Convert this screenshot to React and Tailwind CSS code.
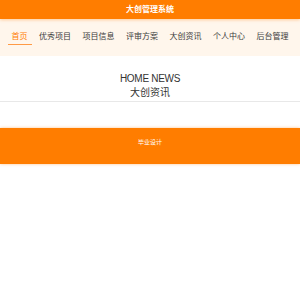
const navItems = ['首页', '优秀项目', '项目信息', '评审方案', '大创资讯', '个人中心', '后台管理'];

const App = () => {
  return (
    <div className="min-h-[300px] bg-white font-['Liberation_Sans','Noto_Sans_CJK_SC',sans-serif]">
      <header className="h-[19px] bg-[#ff7d00] shadow-[0_1px_3px_rgba(255,125,0,0.35)] relative z-10 flex items-center justify-center">
        <span className="text-[8px] leading-none font-semibold text-white">大创管理系统</span>
      </header>

      <nav className="h-[37px] bg-[#fff6ec] flex items-center justify-center gap-[3.5px] pt-[3px]">
        {navItems.map((item, i) => (
          <a
            key={item}
            className={
              i === 0
                ? 'px-1 pb-[3px] text-[8px] leading-[8px] text-[#ff7d00] border-b border-[#ff9a45]'
                : 'px-1 pb-[3px] text-[8px] leading-[8px] text-[#3a3a3a] border-b border-transparent'
            }
          >
            {item}
          </a>
        ))}
      </nav>

      <section className="pt-[17px] flex flex-col items-center text-[#333]">
        <div className="h-[12px] flex items-center text-[10px] leading-none tracking-[-0.3px]">HOME NEWS</div>
        <div className="mt-[2px] h-[12px] flex items-center text-[10px] leading-none">大创资讯</div>
      </section>
      <div className="mt-[2px] h-px bg-[#e8e8e8]" />

      <footer className="mt-[26px] h-[36px] bg-[#ff7d00] shadow-[0_0_3px_rgba(255,125,0,0.45)] flex items-center justify-center pb-[8px]">
        <span className="text-[6px] leading-none text-white">毕业设计</span>
      </footer>
    </div>
  );
};

export default App;
